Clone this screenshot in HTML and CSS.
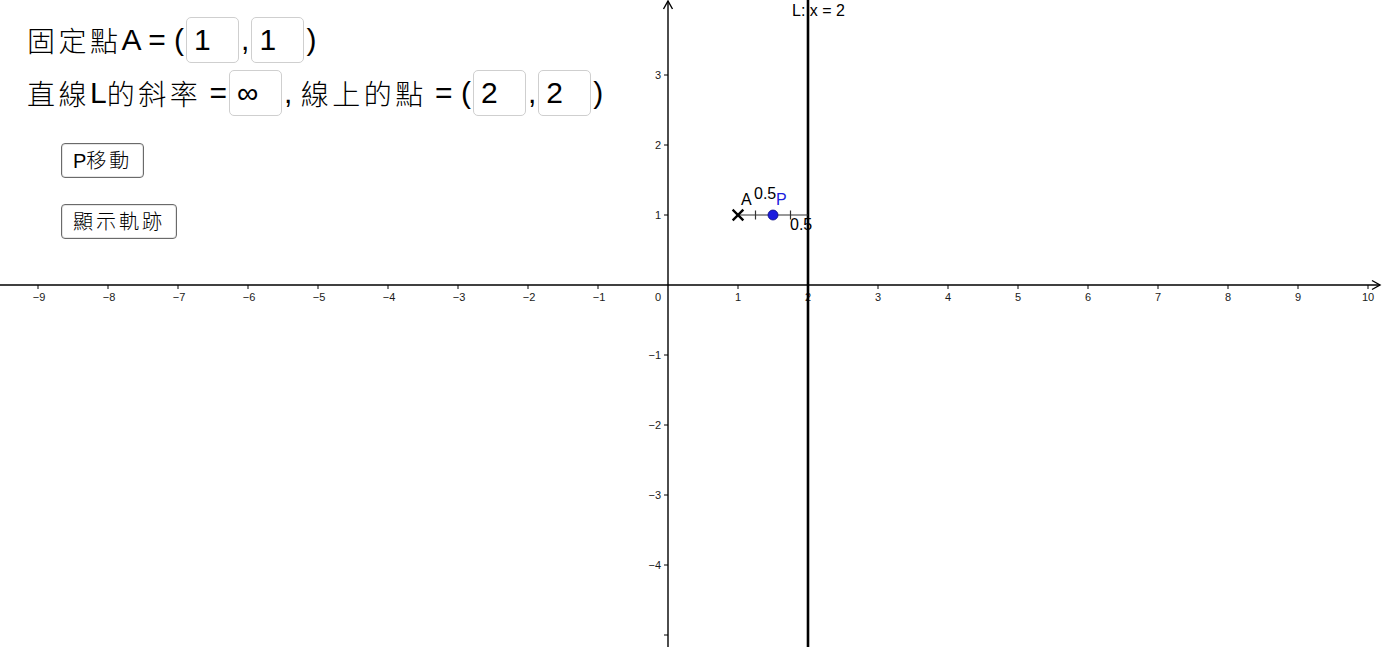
FILE: index.html
```html
<!DOCTYPE html>
<html lang="zh-Hant">
<head>
<meta charset="utf-8">
<title>直線L</title>
<link rel="stylesheet" href="styles.css">
</head>
<body>
<div class="stage">
  <svg class="graph" width="1382" height="647" viewBox="0 0 1382 647" xmlns="http://www.w3.org/2000/svg">
    <g class="axes" stroke="#000" stroke-width="1.4" fill="none">
      <line x1="0" y1="285" x2="1380" y2="285"/>
      <polyline points="1372,280.5 1380,285 1372,289.5"/>
      <line x1="668" y1="1" x2="668" y2="647"/>
      <polyline points="663.5,9 668,1 672.5,9"/>
    </g>
    <g class="ticks" stroke="#000" stroke-width="1">
      <line x1="38" y1="285" x2="38" y2="289"/>
      <line x1="108" y1="285" x2="108" y2="289"/>
      <line x1="178" y1="285" x2="178" y2="289"/>
      <line x1="248" y1="285" x2="248" y2="289"/>
      <line x1="318" y1="285" x2="318" y2="289"/>
      <line x1="388" y1="285" x2="388" y2="289"/>
      <line x1="458" y1="285" x2="458" y2="289"/>
      <line x1="528" y1="285" x2="528" y2="289"/>
      <line x1="598" y1="285" x2="598" y2="289"/>
      <line x1="738" y1="285" x2="738" y2="289"/>
      <line x1="808" y1="285" x2="808" y2="289"/>
      <line x1="878" y1="285" x2="878" y2="289"/>
      <line x1="948" y1="285" x2="948" y2="289"/>
      <line x1="1018" y1="285" x2="1018" y2="289"/>
      <line x1="1088" y1="285" x2="1088" y2="289"/>
      <line x1="1158" y1="285" x2="1158" y2="289"/>
      <line x1="1228" y1="285" x2="1228" y2="289"/>
      <line x1="1298" y1="285" x2="1298" y2="289"/>
      <line x1="1368" y1="285" x2="1368" y2="289"/>
      <line x1="664" y1="75" x2="668" y2="75"/>
      <line x1="664" y1="145" x2="668" y2="145"/>
      <line x1="664" y1="215" x2="668" y2="215"/>
      <line x1="664" y1="355" x2="668" y2="355"/>
      <line x1="664" y1="425" x2="668" y2="425"/>
      <line x1="664" y1="495" x2="668" y2="495"/>
      <line x1="664" y1="565" x2="668" y2="565"/>
      <line x1="664" y1="635" x2="668" y2="635"/>
    </g>
    <g class="tick-labels" text-anchor="middle">
      <text x="39" y="301">−9</text>
      <text x="109" y="301">−8</text>
      <text x="179" y="301">−7</text>
      <text x="249" y="301">−6</text>
      <text x="319" y="301">−5</text>
      <text x="389" y="301">−4</text>
      <text x="459" y="301">−3</text>
      <text x="529" y="301">−2</text>
      <text x="599" y="301">−1</text>
      <text x="658" y="301">0</text>
      <text x="738" y="301">1</text>
      <text x="808" y="301">2</text>
      <text x="878" y="301">3</text>
      <text x="948" y="301">4</text>
      <text x="1018" y="301">5</text>
      <text x="1088" y="301">6</text>
      <text x="1158" y="301">7</text>
      <text x="1228" y="301">8</text>
      <text x="1298" y="301">9</text>
      <text x="1368" y="301">10</text>
    </g>
    <g class="tick-labels" text-anchor="end">
      <text x="661" y="79">3</text>
      <text x="661" y="149">2</text>
      <text x="661" y="219">1</text>
      <text x="661" y="359">−1</text>
      <text x="661" y="429">−2</text>
      <text x="661" y="499">−3</text>
      <text x="661" y="569">−4</text>
    </g>
    <line x1="808" y1="0" x2="808" y2="647" stroke="#000" stroke-width="2.6"/>
    <text class="obj-label" x="792" y="16">L: x = 2</text>
    <g stroke="#333" stroke-width="1.2">
      <line x1="738" y1="215" x2="808" y2="215"/>
      <line x1="755.5" y1="210.5" x2="755.5" y2="219.5"/>
      <line x1="790.5" y1="210.5" x2="790.5" y2="219.5"/>
    </g>
    <g stroke="#000" stroke-width="2.4" stroke-linecap="square">
      <line x1="733.5" y1="210.5" x2="742.5" y2="219.5"/>
      <line x1="733.5" y1="219.5" x2="742.5" y2="210.5"/>
    </g>
    <circle cx="773" cy="215" r="5" fill="#1c1cde" stroke="#0a0a80" stroke-width="0.8"/>
    <text class="obj-label" x="741" y="205">A</text>
    <text class="obj-label" x="754" y="199">0.5</text>
    <text class="obj-label blue" x="776" y="205">P</text>
    <text class="obj-label" x="790" y="230">0.5</text>
  </svg>

  <div class="panel">
    <div class="row">
      <span class="cjk">固定點</span><span>A = (</span><span class="box">1</span><span>,</span><span class="box">1</span><span>)</span>
    </div>
    <div class="row">
      <span class="cjk">直線</span><span>L</span><span class="cjk">的斜率</span><span>&nbsp;=</span><span class="box">∞</span><span>,&nbsp;</span><span class="cjk">線上的點</span><span>&nbsp;= (</span><span class="box">2</span><span>,</span><span class="box">2</span><span>)</span>
    </div>
    <div class="buttons">
      <button class="btn" type="button">P<span class="cjk-b">移動</span></button>
      <button class="btn" type="button"><span class="cjk-b">顯示軌跡</span></button>
    </div>
  </div>
</div>
</body>
</html>
```

FILE: styles.css
```css
html, body {
  margin: 0;
  padding: 0;
  background: #fff;
}

.stage {
  position: relative;
  width: 1382px;
  height: 647px;
  overflow: hidden;
  font-family: "Liberation Sans", "Noto Sans CJK TC", sans-serif;
}

.graph {
  position: absolute;
  left: 0;
  top: 0;
  display: block;
}

.tick-labels text {
  font-family: "Liberation Sans", sans-serif;
  font-size: 11px;
  fill: #1a1a1a;
}

.obj-label {
  font-family: "Liberation Sans", sans-serif;
  font-size: 16px;
  fill: #000;
}

.obj-label.blue {
  fill: #1c1cde;
}

.panel {
  position: absolute;
  left: 0;
  top: 0;
  padding: 17px 0 0 27px;
  display: flex;
  flex-direction: column;
  gap: 7px;
  color: #000;
  font-size: 30px;
}

.row {
  display: flex;
  align-items: center;
  height: 46px;
  white-space: pre;
}

.cjk {
  font-family: "Noto Sans CJK TC", sans-serif;
  font-size: 28px;
  font-weight: 300;
  letter-spacing: 3.5px;
}

.box {
  box-sizing: border-box;
  width: 53px;
  height: 46px;
  margin: 0 2px;
  padding-left: 7px;
  border: 1px solid #cfcfcf;
  border-radius: 5px;
  display: flex;
  align-items: center;
  background: #fff;
}

.buttons {
  display: flex;
  flex-direction: column;
  align-items: flex-start;
  gap: 26px;
  margin-top: 20px;
  margin-left: 34px;
}

.btn {
  box-sizing: border-box;
  height: 35px;
  padding: 0 11px;
  border: 1px solid #6a6a6a;
  border-radius: 4px;
  background: #fff;
  color: #000;
  font-family: "Liberation Sans", "Noto Sans CJK TC", sans-serif;
  font-size: 20px;
  line-height: 1;
  box-shadow: 0 0 0 1px #e6e6e6 inset;
}

.cjk-b {
  font-family: "Noto Sans CJK TC", sans-serif;
  font-weight: 300;
  letter-spacing: 3px;
}
```
